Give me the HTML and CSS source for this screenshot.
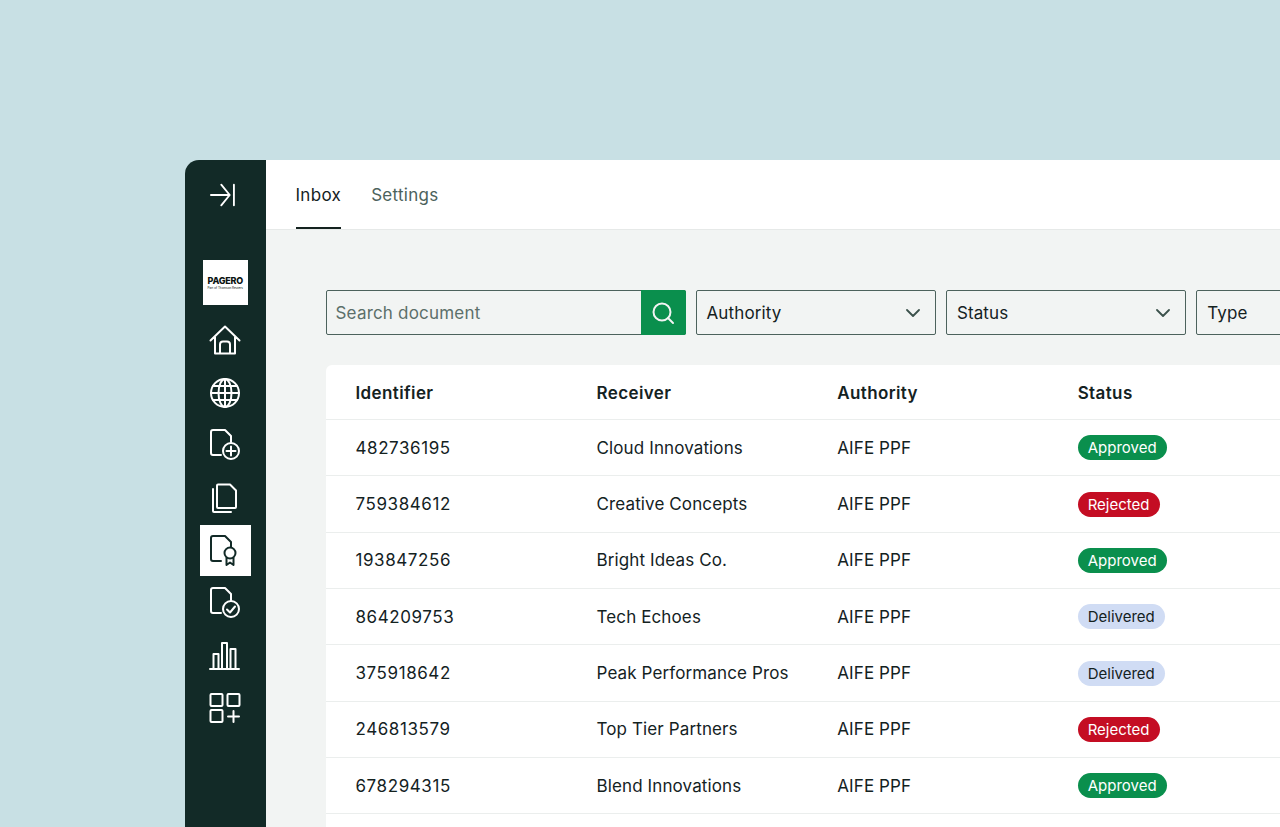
FILE: index.html
```html
<!DOCTYPE html>
<html lang="en">
<head>
<meta charset="utf-8">
<title>Inbox</title>
<link rel="stylesheet" href="styles.css">
</head>
<body>
<div class="window">
  <nav class="sidebar">
    <button class="collapse" aria-label="Expand">
      <svg class="icon" viewBox="0 0 32 32"><path d="M1 16h20M12 5l9 11-9 11M25.500 5v22"/></svg>
    </button>
    <div class="logo"><span class="logo-name">PAGERO</span><span class="logo-sub">Part of Thomson Reuters</span></div>
    <ul class="nav">
      <li class="nav-item"><svg class="icon" viewBox="0 0 32 32"><path d="M1.500 16.500 16 2.500l14.500 14M6 13v16.500h20V13M11 29.500v-9a3 3 0 0 1 3-3h4a3 3 0 0 1 3 3v9"/></svg></li>
      <li class="nav-item"><svg class="icon" viewBox="0 0 32 32"><circle cx="16" cy="16" r="14"/><ellipse cx="16" cy="16" rx="6.500" ry="14"/><path d="M16 2v28M2 16h28M4.200 9h23.600M4.200 23h23.600"/></svg></li>
      <li class="nav-item"><svg class="icon" viewBox="0 0 32 32"><path d="M12 26H4a2 2 0 0 1-2-2V3a2 2 0 0 1 2-2h12l6 6v6"/><circle cx="22" cy="22" r="8"/><path d="M22 17.500v9M17.500 22h9"/></svg></li>
      <li class="nav-item"><svg class="icon" viewBox="0 0 32 32"><path d="M8 25V3.500a1 1 0 0 1 1-1h12l6 6V25a1 1 0 0 1-1 1H9a1 1 0 0 1-1-1Z"/><path d="M4 7v22a1 1 0 0 0 1 1h17"/></svg></li>
      <li class="nav-item active"><svg class="icon" viewBox="0 0 32 32"><path d="M12 27H4a2 2 0 0 1-2-2V4a2 2 0 0 1 2-2h12l6 6v5"/><circle cx="21" cy="19" r="5.500"/><path d="M17.500 24v7l3.500-2.500 3.500 2.500v-7"/></svg></li>
      <li class="nav-item"><svg class="icon" viewBox="0 0 32 32"><path d="M12 26H4a2 2 0 0 1-2-2V3a2 2 0 0 1 2-2h12l6 6v6"/><circle cx="22" cy="22" r="8"/><path d="m18 22.500 3 3 5-6"/></svg></li>
      <li class="nav-item"><svg class="icon" viewBox="0 0 32 32"><path d="M1 30h29M4.500 29V15h5v14M13 29V4h5v25M21.500 29V10h5v19"/></svg></li>
      <li class="nav-item"><svg class="icon" viewBox="0 0 32 32"><rect x="1.500" y="2" width="12" height="12" rx="1"/><rect x="18.500" y="2" width="12" height="12" rx="1"/><rect x="1.500" y="18" width="12" height="12" rx="1"/><path d="M24.500 19v11M19 24.500h11"/></svg></li>
    </ul>
  </nav>
  <div class="main">
    <header class="tabs">
      <a class="tab tab-active">Inbox</a>
      <a class="tab">Settings</a>
    </header>
    <section class="content">
      <div class="filters">
        <div class="search">
          <span class="search-text">Search document</span>
          <span class="search-btn"><svg class="search-icon" viewBox="0 0 24 24"><circle cx="11" cy="11" r="8.500"/><path d="m17 17 5 5"/></svg></span>
        </div>
        <div class="select"><span>Authority</span><svg class="chev" viewBox="0 0 14 8"><path d="m1 1 6 6 6-6"/></svg></div>
        <div class="select"><span>Status</span><svg class="chev" viewBox="0 0 14 8"><path d="m1 1 6 6 6-6"/></svg></div>
        <div class="select"><span>Type</span><svg class="chev" viewBox="0 0 14 8"><path d="m1 1 6 6 6-6"/></svg></div>
      </div>
      <div class="table">
        <div class="row head"><span>Identifier</span><span>Receiver</span><span>Authority</span><span>Status</span></div>
        <div class="row"><span class="id">482736195</span><span>Cloud Innovations</span><span>AIFE PPF</span><span class="status"><b class="badge approved">Approved</b></span></div>
        <div class="row"><span class="id">759384612</span><span>Creative Concepts</span><span>AIFE PPF</span><span class="status"><b class="badge rejected">Rejected</b></span></div>
        <div class="row"><span class="id">193847256</span><span>Bright Ideas Co.</span><span>AIFE PPF</span><span class="status"><b class="badge approved">Approved</b></span></div>
        <div class="row"><span class="id">864209753</span><span>Tech Echoes</span><span>AIFE PPF</span><span class="status"><b class="badge delivered">Delivered</b></span></div>
        <div class="row"><span class="id">375918642</span><span>Peak Performance Pros</span><span>AIFE PPF</span><span class="status"><b class="badge delivered">Delivered</b></span></div>
        <div class="row"><span class="id">246813579</span><span>Top Tier Partners</span><span>AIFE PPF</span><span class="status"><b class="badge rejected">Rejected</b></span></div>
        <div class="row"><span class="id">678294315</span><span>Blend Innovations</span><span>AIFE PPF</span><span class="status"><b class="badge approved">Approved</b></span></div>
        <div class="row"></div>
      </div>
    </section>
  </div>
</div>
</body>
</html>
```
FILE: styles.css
```css
* { box-sizing: border-box; }
html, body { margin: 0; height: 827px; overflow: hidden; }
body {
  background: #c8e0e4;
  padding: 160px 0 0 185px;
  font-family: Inter, "Liberation Sans", sans-serif;
  color: #14221f;
}
.window {
  display: flex;
  width: 1095px;
  height: 667px;
  overflow: hidden;
  border-radius: 14px 0 0 0;
}
.sidebar {
  width: 80.500px;
  flex: none;
  background: #122a27;
  display: flex;
  flex-direction: column;
  align-items: center;
  padding-top: 20px;
  color: #fff;
}
.collapse {
  width: 30px;
  height: 30px;
  padding: 0;
  border: 0;
  background: none;
  color: inherit;
}
.icon {
  display: block;
  width: 32px;
  height: 32px;
  fill: none;
  stroke: currentColor;
  stroke-width: 2;
  stroke-linecap: round;
  stroke-linejoin: round;
}
.collapse .icon { width: 30px; height: 30px; }
.logo {
  width: 45px;
  height: 45px;
  margin-top: 50px;
  background: #fff;
  color: #0c1513;
  display: flex;
  flex-direction: column;
  align-items: center;
  justify-content: center;
}
.logo-name {
  font-weight: 800;
  font-size: 9px;
  line-height: 10px;
  letter-spacing: -0.250px;
}
.logo-sub {
  font-size: 3px;
  line-height: 4px;
  white-space: nowrap;
}
.nav {
  list-style: none;
  margin: 9.500px 0 0;
  padding: 0;
  display: flex;
  flex-direction: column;
  gap: 1.500px;
}
.nav-item {
  width: 51px;
  height: 51px;
  display: flex;
  align-items: center;
  justify-content: center;
}
.active { background: #fff; color: #122a27; }
.main { flex: 1; min-width: 0; display: flex; flex-direction: column; background: #f2f4f3; }
.tabs {
  height: 70px;
  flex: none;
  background: #fff;
  border-bottom: 1px solid #e6e9e8;
  display: flex;
  gap: 30px;
  padding-left: 30px;
}
.tab {
  height: 69px;
  padding-top: 25px;
  font-size: 17px;
  line-height: 21px;
  letter-spacing: 0.300px;
  color: #4c625c;
}
.tab-active { color: #14221f; border-bottom: 2px solid #14221f; }
.content { padding: 60px 0 0 60px; width: 1100px; }
.filters { display: flex; gap: 10px; width: 1100px; }
.search {
  width: 360px;
  height: 45px;
  flex: none;
  display: flex;
  align-items: center;
  justify-content: space-between;
  border: 1px solid #4c625c;
  border-radius: 2px;
  padding-left: 9px;
  font-size: 17px;
  letter-spacing: 0.200px;
  color: #5c6f6a;
}
.search-btn {
  width: 45px;
  height: 45px;
  margin: -1px;
  background: #0a8f4d;
  border-radius: 0 2px 2px 0;
  display: flex;
  align-items: center;
  justify-content: center;
}
.search-icon { width: 24px; height: 24px; fill: none; stroke: #f2f4f3; stroke-width: 2; stroke-linecap: round; }
.select {
  width: 240.400px;
  height: 45px;
  flex: none;
  display: flex;
  align-items: center;
  justify-content: space-between;
  border: 1px solid #4c625c;
  border-radius: 2px;
  padding: 0 15px 0 10px;
  font-size: 17px;
  letter-spacing: 0.120px;
}
.chev { width: 14px; height: 8px; fill: none; stroke: #3c524c; stroke-width: 1.800; stroke-linecap: round; stroke-linejoin: round; }
.table {
  margin-top: 30px;
  width: 1000px;
  background: #fff;
  border-radius: 6px 0 0 0;
}
.row {
  display: grid;
  grid-template-columns: 241px 240.700px 240.500px 1fr;
  align-items: center;
  height: 56.350px;
  padding-left: 30px;
  border-bottom: 1.500px solid #ebeeed;
  font-size: 17px;
  letter-spacing: 0.120px;
}
.head { height: 55px; padding-top: 1px; font-weight: 600; letter-spacing: 0.380px; }
.id { letter-spacing: 0.580px; }
.status { display: flex; align-items: center; }
.badge {
  display: inline-block;
  height: 25px;
  padding: 0 10px;
  border-radius: 13px;
  font-weight: 400;
  font-size: 15px;
  letter-spacing: 0;
  line-height: 25px;
}
.approved { background: #0a8f4d; color: #fff; }
.rejected { background: #c40d23; color: #fff; }
.delivered { background: #d0dcf4; color: #14221f; }
```
